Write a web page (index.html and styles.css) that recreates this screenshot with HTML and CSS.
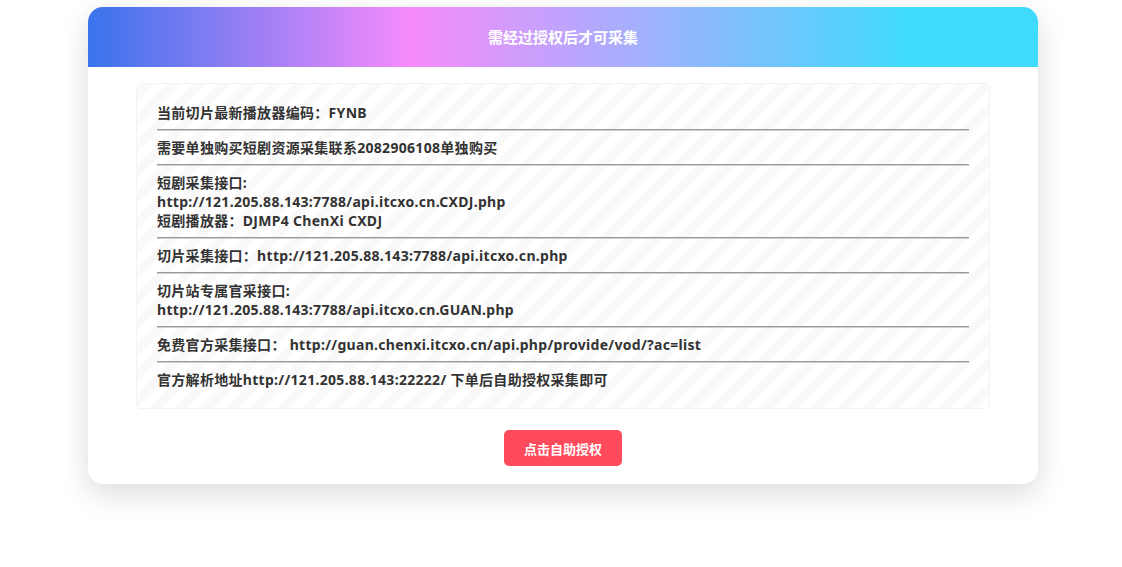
FILE: index.html
```html
<!DOCTYPE html>
<html lang="zh-CN">
<head>
<meta charset="UTF-8" />
<meta name="viewport" content="width=device-width, initial-scale=1" />
<title>授权采集</title>
<link rel="stylesheet" href="styles.css">
</head>
<body>

<div class="card">
  <div class="card-head">需经过授权后才可采集</div>

  <div class="card-body">
    <div class="notice">
      <p>当前切片最新播放器编码：FYNB</p>
      <hr>
      <p>需要单独购买短剧资源采集联系2082906108单独购买</p>
      <hr>
      <p>短剧采集接口:<br>http://121.205.88.143:7788/api.itcxo.cn.CXDJ.php<br>短剧播放器：DJMP4 ChenXi CXDJ</p>
      <hr>
      <p>切片采集接口：http://121.205.88.143:7788/api.itcxo.cn.php</p>
      <hr>
      <p>切片站专属官采接口:<br>http://121.205.88.143:7788/api.itcxo.cn.GUAN.php</p>
      <hr>
      <p>免费官方采集接口： http://guan.chenxi.itcxo.cn/api.php/provide/vod/?ac=list</p>
      <hr>
      <p>官方解析地址http://121.205.88.143:22222/ 下单后自助授权采集即可</p>
    </div>

    <div class="actions">
      <button class="btn-auth">点击自助授权</button>
    </div>
  </div>
</div>

</body>
</html>
```

FILE: styles.css
```css
body {
  margin: 0;
  padding: 7px 0 40px 4px;
  background: #fff;
  font-family: "Noto Sans", "Noto Sans CJK SC", sans-serif;
  color: #333;
}
.card {
  width: 950px;
  margin: 0 auto;
  background: #fff;
  border-radius: 15px;
  overflow: hidden;
  box-shadow: 0 10px 30px rgba(0, 0, 0, 0.14);
}
.card-head {
  height: 60px;
  line-height: 60px;
  text-align: center;
  color: #fff;
  font-size: 15px;
  font-weight: bold;
  background: linear-gradient(to right, #3a73ec 0%, #f78bfc 34%, #41dbfc 86%, #40dbfc 100%);
}
.card-body {
  padding: 16px 48px 18px;
}
/* 条纹说明框 */
.notice {
  padding: 19px 20px;
  border: 1px solid #f3f3f3;
  border-radius: 5px;
  background-color: #fff;
  background-image: repeating-linear-gradient(-45deg, #fff 0, #fff 9px, #f9f9f9 9px, #f9f9f9 18px);
  font-size: 14px;
  font-weight: bold;
  line-height: 19px;
  letter-spacing: 0.3px;
}
.notice p {
  margin: 0;
}
.notice hr {
  margin: 7px 0;
  border: 0;
  border-top: 1px solid #9a9a9a;
  border-bottom: 1px solid #cfcfcf;
}
.actions {
  text-align: center;
  padding-top: 21px;
}
.btn-auth {
  width: 118px;
  height: 36px;
  border: none;
  border-radius: 5px;
  background: #ff4b5c;
  color: #fff;
  font-family: "Noto Sans CJK SC", sans-serif;
  font-size: 13px;
  font-weight: bold;
  cursor: pointer;
}
```
